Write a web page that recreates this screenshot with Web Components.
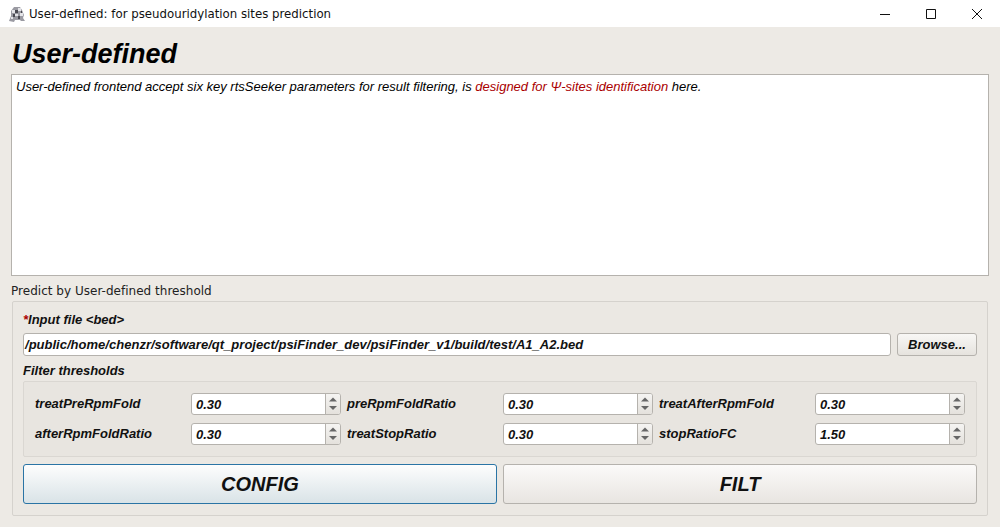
<!DOCTYPE html>
<html>
<head>
<meta charset="utf-8">
<title>User-defined</title>
<style>
  html, body { margin: 0; height: 527px; overflow: hidden; background: #edeae5; }
  body { display: flex; flex-direction: column; font-family: "Liberation Sans", Arial, sans-serif; color: #000; }
</style>
</head>
<body>
<title-bar>User-defined: for pseudouridylation sites prediction</title-bar>
<main-panel>
  <span slot="heading">User-defined</span>
  <span slot="intro">User-defined frontend accept six key rtsSeeker parameters for result filtering, is <font color="#aa0000">designed for Ψ-sites identification</font> here.</span>
  <span slot="legend">Predict by User-defined threshold</span>
  <file-row path="/public/home/chenzr/software/qt_project/psiFinder_dev/psiFinder_v1/build/test/A1_A2.bed"></file-row>
  <filter-grid>
    <spin-field label="treatPreRpmFold" value="0.30"></spin-field>
    <spin-field label="preRpmFoldRatio" value="0.30"></spin-field>
    <spin-field label="treatAfterRpmFold" value="0.30"></spin-field>
    <spin-field label="afterRpmFoldRatio" value="0.30"></spin-field>
    <spin-field label="treatStopRatio" value="0.30"></spin-field>
    <spin-field label="stopRatioFC" value="1.50"></spin-field>
  </filter-grid>
  <div slot="actions" style="display:flex;gap:6px">
    <big-button primary style="flex:1">CONFIG</big-button>
    <big-button style="flex:1">FILT</big-button>
  </div>
</main-panel>
<script>
class TitleBar extends HTMLElement {
  constructor() {
    super();
    this.attachShadow({ mode: "open" }).innerHTML = `
      <style>
        :host { display: flex; align-items: center; height: 27px; background: #fff; flex: none; }
        .icon { width: 16px; height: 16px; margin: 0 4px 0 9px; }
        .text { font: 11.77px "DejaVu Sans", sans-serif; color: #111; flex: 1; white-space: nowrap; }
        .btn { width: 46px; height: 27px; display: flex; align-items: center; justify-content: center; }
        .btn svg { width: 12px; height: 12px; }
        .btns { display: flex; }
      </style>
      <svg class="icon" viewBox="0 0 16 16">
        <path d="M0 15 2 10 2 5 5 1h6l2 3 2 5-1 3 2 3h-4l-1-1H6l-1 2z" fill="#9a9aa2"/>
        <path d="M3 4h3v3H3zM9 2h3v3H9zM6 8h3v2H6zM11 7h3v3h-3zM2 11h2v2H2z" fill="#e4e4e8"/>
        <path d="M6 4h3v3H6zM4 8h2v3H4zM9 10h2v3H9zM12 5h1v2h-1z" fill="#4a4a52"/>
      </svg>
      <span class="text"><slot></slot></span>
      <div class="btns">
        <div class="btn"><svg viewBox="0 0 12 12"><path d="M1 6.5h10" stroke="#111" fill="none"/></svg></div>
        <div class="btn"><svg viewBox="0 0 12 12"><path d="M1.5 1.5h9v9h-9z" stroke="#111" fill="none"/></svg></div>
        <div class="btn"><svg viewBox="0 0 12 12"><path d="M1 1l10 10M11 1 1 11" stroke="#111" fill="none"/></svg></div>
      </div>`;
  }
}

class MainPanel extends HTMLElement {
  constructor() {
    super();
    this.attachShadow({ mode: "open" }).innerHTML = `
      <style>
        :host { display: block; padding: 0 11px; flex: 1; }
        h1 { margin: 0; font: italic bold 27px/55px "Liberation Sans", sans-serif; height: 47px; padding-left: 1px; }
        .intro { background: #fff; border: 1px solid #b5b2ad; padding: 4px 4px; height: 192px;
          font: italic 13px/16px "Liberation Sans", sans-serif; }
        .legend { font: 12px/14px "DejaVu Sans", sans-serif; color: #222; margin-top: 8px; height: 17px; letter-spacing: .02px; }
        .group { margin: 0 1px; height: 213px; border: 1px solid #d5d2cd; border-radius: 2px;
          background: #ebe8e3; padding: 0 10px; display: flex; flex-direction: column; }
        .actions { margin-top: 7px; }
      </style>
      <h1><slot name="heading"></slot></h1>
      <div class="intro"><slot name="intro"></slot></div>
      <div class="legend"><slot name="legend"></slot></div>
      <div class="group">
        <slot></slot>
        <div class="actions"><slot name="actions"></slot></div>
      </div>`;
  }
}

class FileRow extends HTMLElement {
  constructor() {
    super();
    this.attachShadow({ mode: "open" }).innerHTML = `
      <style>
        :host { display: block; font: italic bold 13px/16px "Liberation Sans", sans-serif; color: #111; }
        .label { height: 16px; padding-top: 10px; }
        .label b { color: #aa0000; }
        .row { display: flex; gap: 6px; margin-top: 5px; height: 23px; }
        .path { flex: 1; background: #fff; border: 1px solid #b5b2ad; border-radius: 3px; padding: 0 0 0 1px; line-height: 21px;
          white-space: nowrap; overflow: hidden; letter-spacing: .015px; }
        .browse { width: 78px; text-align: center; border: 1px solid #b5b2ad; border-radius: 3px; line-height: 21px;
          background: linear-gradient(#f8f7f5, #e6e3de); }
      </style>
      <div class="label"><b>*</b>Input file &lt;bed&gt;</div>
      <div class="row">
        <div class="path">${this.getAttribute("path")}</div>
        <div class="browse">Browse...</div>
      </div>`;
  }
}

class FilterGrid extends HTMLElement {
  constructor() {
    super();
    this.attachShadow({ mode: "open" }).innerHTML = `
      <style>
        :host { display: block; font: italic bold 13px/16px "Liberation Sans", sans-serif; color: #111; }
        .label { margin-top: 7px; height: 16px; }
        .box { margin-top: 2px; height: 76px; box-sizing: border-box; border: 1px solid #dad7d2; border-radius: 2px; background: #e8e5e0;
          padding: 11px 11px 0; display: grid; grid-template-columns: repeat(3, 1fr); row-gap: 8px; column-gap: 6px; align-content: start; }
      </style>
      <div class="label">Filter thresholds</div>
      <div class="box"><slot></slot></div>`;
  }
}

class SpinField extends HTMLElement {
  constructor() {
    super();
    this.attachShadow({ mode: "open" }).innerHTML = `
      <style>
        :host { display: flex; align-items: center; height: 22px; font: italic bold 13px "Liberation Sans", sans-serif; color: #111; }
        .label { width: 156px; flex: none; margin-top: -2px; }
        .spin { flex: 1; display: flex; height: 22px; box-sizing: border-box; border: 1px solid #b5b2ad; border-radius: 3px; background: #fff; overflow: hidden; }
        .value { flex: 1; padding-left: 4px; line-height: 22px; }
        .arrows { width: 14px; border-left: 1px solid #b5b2ad; background: linear-gradient(#f5f4f2, #e4e1dc); }
        .arrows svg { display: block; width: 14px; height: 20px; }
      </style>
      <span class="label">${this.getAttribute("label")}</span>
      <div class="spin">
        <span class="value">${this.getAttribute("value")}</span>
        <div class="arrows"><svg viewBox="0 0 14 20"><path d="M7 3.5l4 4H3zM3 12h8l-4 4z" fill="#666"/></svg></div>
      </div>`;
  }
}

class BigButton extends HTMLElement {
  constructor() {
    super();
    this.attachShadow({ mode: "open" }).innerHTML = `
      <style>
        :host { display: flex; align-items: center; justify-content: center; height: 40px; box-sizing: border-box;
          border: 1px solid #b5b2ad; border-radius: 3px; background: linear-gradient(#fbfaf9, #e8e5e1);
          font: italic bold 20px "Liberation Sans", sans-serif; color: #111; }
        :host([primary]) { border-color: #2a74a5; background: linear-gradient(#fdfdfd, #d9e3e7); }
      </style>
      <slot></slot>`;
  }
}

customElements.define("title-bar", TitleBar);
customElements.define("main-panel", MainPanel);
customElements.define("file-row", FileRow);
customElements.define("filter-grid", FilterGrid);
customElements.define("spin-field", SpinField);
customElements.define("big-button", BigButton);
</script>
</body>
</html>
